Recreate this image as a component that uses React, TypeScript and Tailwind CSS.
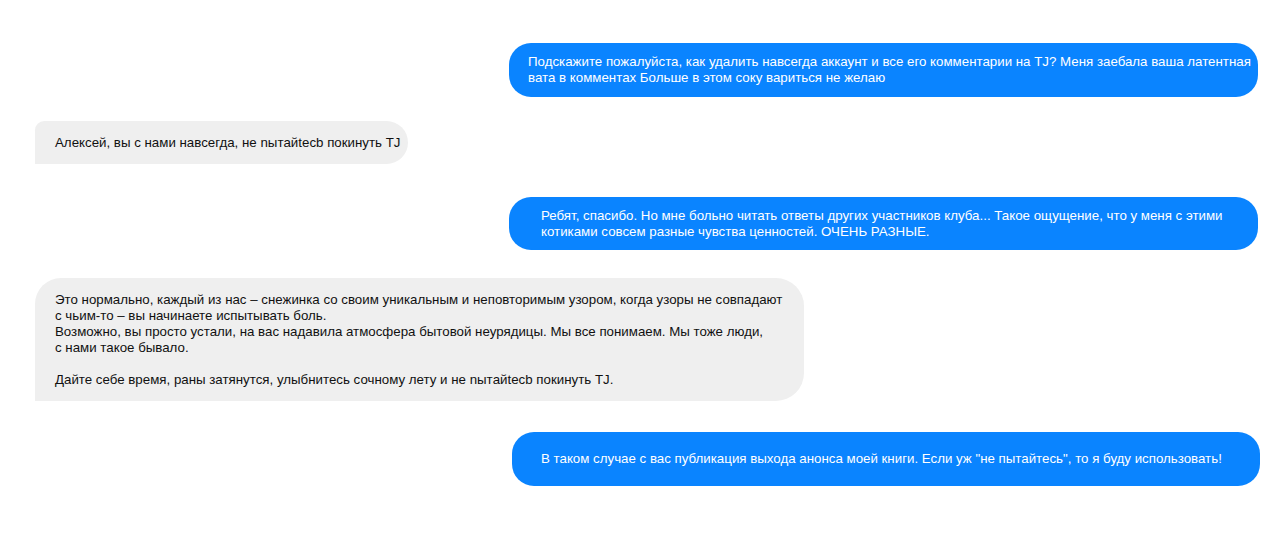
import React from "react";

type Msg = { from: "me" | "them"; lines: string[]; box: string };

const messages: Msg[] = [
  {
    from: "me",
    box: "mt-[43px] ml-[509px] w-[749px] h-[54px] pl-[19px]",
    lines: [
      "Подскажите пожалуйста, как удалить навсегда аккаунт и все его комментарии на TJ? Меня заебала ваша латентная",
      "вата в комментах Больше в этом соку вариться не желаю",
    ],
  },
  {
    from: "them",
    box: "mt-[24px] ml-[35px] w-[373px] h-[43px] pl-[20px] rounded-tl-[12px]",
    lines: ["Алексей, вы с нами навсегда, не nытaйtecb покинуть TJ"],
  },
  {
    from: "me",
    box: "mt-[33px] ml-[509px] w-[749px] h-[53px] pl-[32px]",
    lines: [
      "Ребят, спасибо. Но мне больно читать ответы других участников клуба... Такое ощущение, что у меня с этими",
      "котиками совсем разные чувства ценностей. ОЧЕНЬ РАЗНЫЕ.",
    ],
  },
  {
    from: "them",
    box: "mt-[28px] ml-[35px] w-[769px] h-[123px] pl-[20px] rounded-tl-[26px]",
    lines: [
      "Это нормально, каждый из нас – снежинка со своим уникальным и неповторимым узором, когда узоры не совпадают",
      "с чьим-то – вы начинаете испытывать боль.",
      "Возможно, вы просто устали, на вас надавила атмосфера бытовой неурядицы. Мы все понимаем. Мы тоже люди,",
      "с нами такое бывало.",
      "",
      "Дайте себе время, раны затянутся, улыбнитесь сочному лету и не nытaйtecb покинуть TJ.",
    ],
  },
  {
    from: "me",
    box: "mt-[31px] ml-[512px] w-[748px] h-[54px] pl-[29px]",
    lines: ['В таком случае с вас публикация выхода анонса моей книги. Если уж "не пытайтесь", то я буду использовать!'],
  },
];

function Bubble({ m }: { m: Msg }) {
  const skin =
    m.from === "me"
      ? "bg-[#0a84ff] text-white rounded-[22px]"
      : "bg-[#efefef] text-[#111] rounded-tr-[28px] rounded-br-[28px] rounded-bl-none";
  return (
    <div className={`flex items-center shrink-0 ${skin} ${m.box}`}>
      <div className="text-[13.3px] leading-[16px] whitespace-nowrap">
        {m.lines.map((l, i) => (
          <div key={i} className="h-[16px]">
            {l}
          </div>
        ))}
      </div>
    </div>
  );
}

export default function App() {
  return (
    <div className="w-[1280px] h-[533px] bg-white overflow-hidden flex flex-col font-['Liberation_Sans',Arial,sans-serif]">
      {messages.map((m, i) => (
        <Bubble key={i} m={m} />
      ))}
    </div>
  );
}
